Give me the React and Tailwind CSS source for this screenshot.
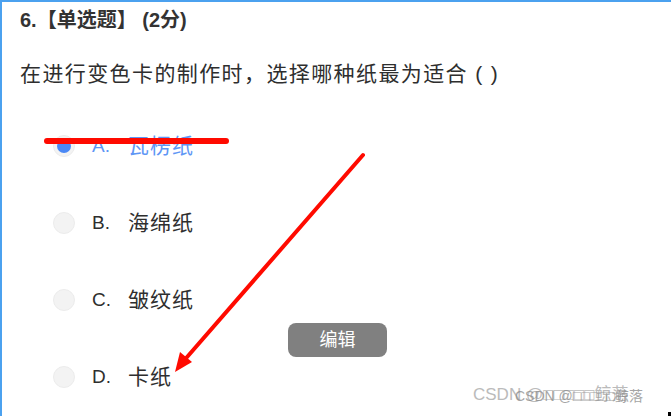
import React from "react";

const options = [
  { key: "A", text: "瓦楞纸", checked: true },
  { key: "B", text: "海绵纸" },
  { key: "C", text: "皱纹纸" },
  { key: "D", text: "卡纸" },
];

const font = { fontFamily: '"Liberation Sans", "Noto Sans CJK SC", sans-serif' };

const Radio = ({ checked }) => (
  <span className="flex h-[22px] w-[22px] shrink-0 items-center justify-center rounded-full border border-[#ececec] bg-[#f3f3f3]">
    {checked && <span className="h-[14px] w-[14px] rounded-full bg-[#4a88f5]" />}
  </span>
);

const App = () => {
  return (
    <div
      className="relative h-[416px] w-[671px] overflow-hidden border-l-2 border-t-2 border-[#4ba1ef] bg-white"
      style={font}
    >
      <div className="pl-[18px] pt-[6px]">
        <h2 className="text-[20px] font-bold leading-[24px] text-[#333]">
          6.【单选题】 (2分)
        </h2>
        <p className="mt-[27px] text-[21px] leading-[30px] tracking-[1.4px] text-[#2e2e2e]">
          在进行变色卡的制作时，选择哪种纸最为适合 ( )
        </p>

        <ul className="mt-[42px] flex flex-col gap-[47px] pl-[33px]">
          {options.map((opt) => (
            <li key={opt.key} className="flex h-[30px] items-center">
              <Radio checked={opt.checked} />
              <span
                className={`ml-[17px] w-[36px] text-[19px] ${
                  opt.checked ? "text-[#5e96f5]" : "text-[#2e2e2e]"
                }`}
              >
                {opt.key}.
              </span>
              <span
                className={`text-[21px] tracking-[1px] ${
                  opt.checked ? "text-[#5e96f5]" : "text-[#2e2e2e]"
                }`}
              >
                {opt.text}
              </span>
            </li>
          ))}
        </ul>
      </div>

      {/* red annotations */}
      <svg className="pointer-events-none absolute left-[-2px] top-[-2px]" width="671" height="416">
        <line x1="47" y1="141" x2="226" y2="141" stroke="#ff0a00" strokeWidth="6" strokeLinecap="round" />
        <line x1="363" y1="155" x2="181" y2="364" stroke="#ff0a00" strokeWidth="4" strokeLinecap="round" />
        <polygon points="175,372 180,352 192,362" fill="#ff0a00" />
      </svg>

      <button className="absolute left-[286px] top-[321px] flex h-[34px] w-[99px] items-center justify-center rounded-[8px] bg-[#808080] text-[18px] text-white">
        编辑
      </button>

      <div className="absolute left-[471px] top-[380px] text-[17px] text-[#b4b4b4] opacity-90">
        CSDN @□□□□□鲸落
      </div>
      <div className="absolute left-[513px] top-[384px] text-[14px] text-[#8f8f8f] opacity-80">
        CSDN @□□□□□鲸落
      </div>

      <div className="absolute bottom-0 right-0 h-[4px] w-[3px] bg-black" />
    </div>
  );
};

export default App;
